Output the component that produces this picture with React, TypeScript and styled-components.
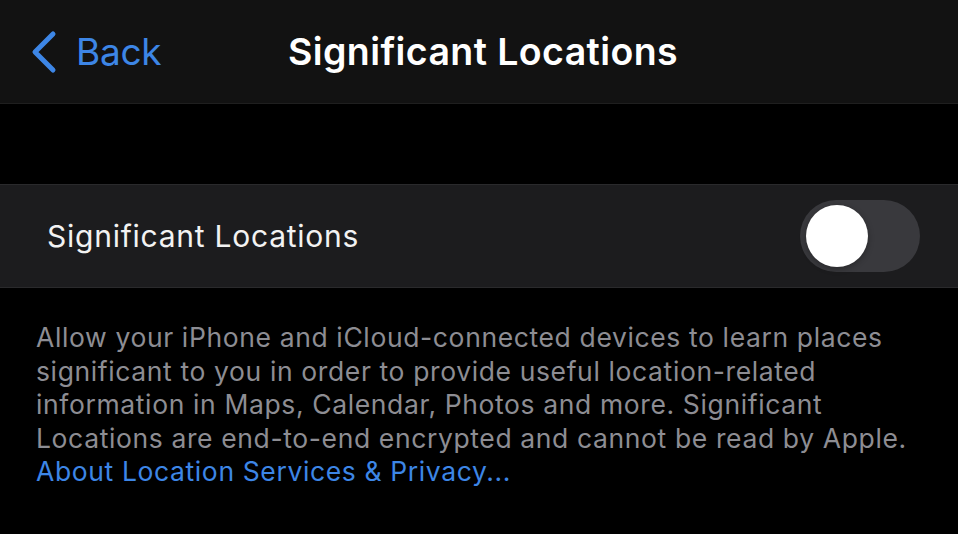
import styled, { createGlobalStyle } from "styled-components";

const GlobalStyle = createGlobalStyle`
  html, body {
    margin: 0;
    padding: 0;
    background: #000;
  }
  body {
    font-family: Inter, "Noto Sans", "Liberation Sans", sans-serif;
    -webkit-font-smoothing: antialiased;
  }
`;

const Screen = styled.div`
  width: 958px;
  height: 534px;
  background: #000;
  overflow: hidden;
  display: flex;
  flex-direction: column;
`;

const NavBar = styled.header`
  height: 104px;
  flex-shrink: 0;
  background: #121212;
  border-bottom: 1px solid #1f1f1f;
  display: grid;
  grid-template-columns: 1fr auto 1fr;
  align-items: center;
  box-sizing: border-box;
  padding-left: 8px;
`;

const BackButton = styled.button`
  justify-self: start;
  display: flex;
  align-items: center;
  gap: 18px;
  background: none;
  border: 0;
  padding: 0 0 0 22px;
  color: #3d86e6;
  font-family: inherit;
  font-size: 37px;
  font-weight: 400;
  letter-spacing: -0.3px;
  cursor: pointer;
`;

const Title = styled.h1`
  margin: 0;
  color: #fff;
  font-size: 37.5px;
  font-weight: 600;
  letter-spacing: 0.4px;
`;

const Spacer = styled.div`
  height: 80px;
  flex-shrink: 0;
`;

const SettingRow = styled.div`
  height: 104px;
  flex-shrink: 0;
  background: #1c1c1e;
  border-top: 1px solid #2a2a2c;
  border-bottom: 1px solid #2a2a2c;
  box-sizing: border-box;
  display: flex;
  align-items: center;
  justify-content: space-between;
  padding: 0 38px 0 47px;
`;

const RowLabel = styled.span`
  color: #f2f2f2;
  font-size: 30px;
  letter-spacing: 0.75px;
`;

const Track = styled.div<{ $on: boolean }>`
  width: 120px;
  height: 72px;
  border-radius: 36px;
  background: ${(p) => (p.$on ? "#30d158" : "#39393d")};
  display: flex;
  align-items: center;
  justify-content: ${(p) => (p.$on ? "flex-end" : "flex-start")};
  padding: 0 6px;
  box-sizing: border-box;
`;

const Knob = styled.div`
  width: 62px;
  height: 62px;
  border-radius: 50%;
  background: #fff;
  box-shadow: 0 2px 6px rgba(0, 0, 0, 0.3);
`;

const Footer = styled.p`
  margin: 0;
  padding: 33px 20px 0 36px;
  color: #8d8d93;
  font-size: 26.5px;
  line-height: 33.5px;
  letter-spacing: 0.62px;
  white-space: nowrap;
`;

const Link = styled.a`
  color: #3d86e6;
  text-decoration: none;
`;

function Chevron() {
  return (
    <svg width="28" height="44" viewBox="0 0 28 44" fill="none">
      <path
        d="M23 4 L5 22 L23 40"
        stroke="#3d86e6"
        strokeWidth="5"
        strokeLinecap="round"
        strokeLinejoin="round"
      />
    </svg>
  );
}

export default function App() {
  return (
    <>
      <GlobalStyle />
      <Screen>
        <NavBar>
          <BackButton>
            <Chevron />
            Back
          </BackButton>
          <Title>Significant Locations</Title>
          <div />
        </NavBar>
        <Spacer />
        <SettingRow>
          <RowLabel>Significant Locations</RowLabel>
          <Track $on={false}>
            <Knob />
          </Track>
        </SettingRow>
        <Footer>
          Allow your iPhone and iCloud-connected devices to learn places
          <br />
          significant to you in order to provide useful location-related
          <br />
          information in Maps, Calendar, Photos and more. Significant
          <br />
          Locations are end-to-end encrypted and cannot be read by Apple.
          <br />
          <Link href="#">About Location Services &amp; Privacy...</Link>
        </Footer>
      </Screen>
    </>
  );
}
